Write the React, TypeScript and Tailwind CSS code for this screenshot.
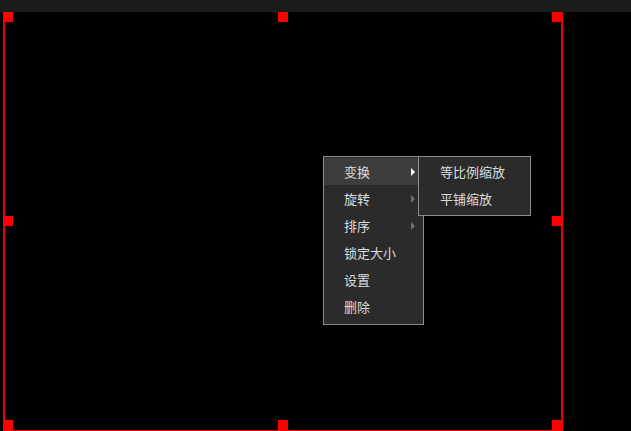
const font = { fontFamily: '"Microsoft YaHei", "Noto Sans CJK SC", "Noto Sans", sans-serif' };

function Handle() {
  return <div className="w-[10px] h-[10px] bg-[#ff0000]" />;
}

function HandleRow({ middle = true }: { middle?: boolean }) {
  return (
    <div className="flex justify-between">
      <Handle />
      {middle && <Handle />}
      <Handle />
    </div>
  );
}

function MenuItem({ label, active, arrow }: { label: string; active?: boolean; arrow?: boolean }) {
  return (
    <div
      className={`flex items-center justify-between h-[27px] pl-[20px] pr-[8px] text-[13px] text-[#dcdcdc] ${
        active ? 'bg-[#3d3d3d]' : ''
      }`}
    >
      <span>{label}</span>
      {arrow && (
        <span
          className={`w-0 h-0 border-y-[4px] border-y-transparent border-l-[4px] ${
            active ? 'border-l-white' : 'border-l-[#6e6e6e]'
          }`}
        />
      )}
    </div>
  );
}

export default function App() {
  return (
    <div className="relative w-[631px] h-[431px] bg-black overflow-hidden" style={font}>
      {/* Top strip */}
      <div className="h-[12px] bg-[#1b1b1b]" />

      {/* Selection frame */}
      <div className="ml-[3px] w-[560px] h-[419px] flex">
        <div className="w-[2px] bg-[#f00000]" />
        <div className="flex-1 flex flex-col">
          <div className="flex-1 -ml-[2px] -mr-px flex flex-col justify-between">
            <HandleRow />
            <HandleRow middle={false} />
            <HandleRow />
          </div>
          <div className="h-px bg-[#ff0000]" />
        </div>
        <div className="w-[2px] bg-[#f00000]" />
      </div>

      {/* Context menu */}
      <div className="absolute left-[323px] top-[156px] flex items-start">
        <div className="w-[101px] h-[169px] bg-[#2b2b2b] border border-[#8c8c8c] py-px">
          <MenuItem label="变换" active arrow />
          <MenuItem label="旋转" arrow />
          <MenuItem label="排序" arrow />
          <MenuItem label="锁定大小" />
          <MenuItem label="设置" />
          <MenuItem label="删除" />
        </div>

        {/* Submenu */}
        <div className="-ml-[6px] w-[113px] h-[60px] bg-[#2b2b2b] border border-[#8c8c8c] py-px text-[13px] text-[#dcdcdc]">
          <div className="flex items-center h-[27px] pl-[21px]">等比例缩放</div>
          <div className="flex items-center h-[27px] pl-[21px]">平铺缩放</div>
        </div>
      </div>
    </div>
  );
}
